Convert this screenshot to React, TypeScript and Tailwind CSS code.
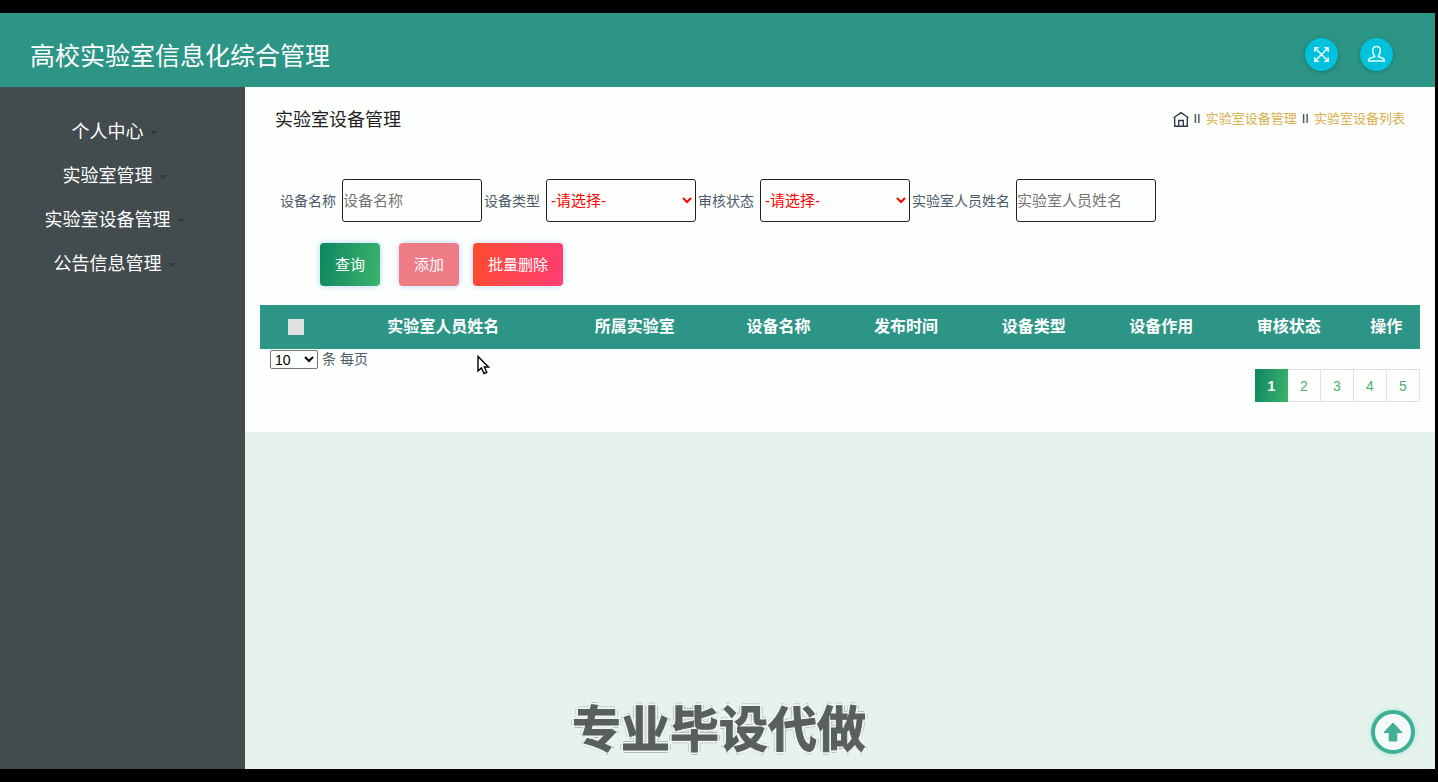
import { useState } from 'react'

const menus = ['个人中心', '实验室管理', '实验室设备管理', '公告信息管理']

const columns = [
  { title: '实验室人员姓名', width: 'w-[19.2%]' },
  { title: '所属实验室', width: 'w-[13.8%]' },
  { title: '设备名称', width: 'w-[11%]' },
  { title: '发布时间', width: 'w-[11%]' },
  { title: '设备类型', width: 'w-[11%]' },
  { title: '设备作用', width: 'w-[11%]' },
  { title: '审核状态', width: 'w-[11%]' },
  { title: '操作', width: 'w-[5.8%]' },
]

const fieldStyle = 'h-[43px] rounded-[3px] border border-[#222] text-[15px]'
const buttonStyle = 'h-[43px] rounded-[4px] px-[15px] text-[15px] text-white shadow-[0_0_6px_#b5d3f5]'
const roundStyle = 'flex size-[33px] items-center justify-center rounded-full bg-[#00c2dc] text-[#e4fbff] shadow-[0_1px_4px_#1c7468]'

function FullscreenIcon() {
  return (
    <svg width="17" height="17" viewBox="0 0 17 17" fill="none" stroke="currentColor" strokeWidth="1.6">
      <path d="M1.800 5.800V1.800h4M11.200 1.800h4v4M15.200 11.200v4h-4M5.800 15.200h-4v-4M2 2l13 13M15 2L2 15" />
    </svg>
  )
}

function UserIcon() {
  return (
    <svg width="19" height="18" viewBox="0 0 19 18" fill="none" stroke="currentColor" strokeWidth="1.6">
      <path d="M7.600 11C6.200 9.300 5.700 7.500 5.700 5.500 5.700 3 7.200 1.500 9.500 1.500s3.800 1.500 3.800 4c0 2-.5 3.800-1.900 5.500v.7l4.500 1.500c1.100.5 1.600 1.400 1.600 2.800h-16c0-1.400.5-2.300 1.600-2.800l4.500-1.500z" />
    </svg>
  )
}

function HomeIcon() {
  return (
    <svg width="16" height="17" viewBox="0 0 16 17" fill="none" stroke="#333b48" strokeWidth="1.4">
      <path d="M.600 6.800L8 1.600l7.400 5.200M1.700 6v9.300h12.600V6M5.700 15.300V9.500h4.600v5.800" />
    </svg>
  )
}

function TypeSelect({ id, label }: { id: string; label: string }) {
  return (
    <div className="flex items-center gap-1.5">
      <label htmlFor={id}>{label}</label>
      <select id={id} className={`${fieldStyle} w-[150px] text-[#f00]`}>
        <option>-请选择-</option>
      </select>
    </div>
  )
}

function TextField({ id, label }: { id: string; label: string }) {
  return (
    <div className="flex items-center gap-1.5">
      <label htmlFor={id}>{label}</label>
      <input id={id} type="text" placeholder={label} className={`${fieldStyle} w-[140px] placeholder:text-[#757575]`} />
    </div>
  )
}

export default function App() {
  const [page, setPage] = useState(1)

  return (
    <div className="relative flex min-h-screen flex-col bg-black py-[13px] pr-[3px] font-['Liberation_Sans','Noto_Sans_CJK_SC',sans-serif] text-sm text-[#4b5a68]">
      <header className="flex h-[74px] items-center justify-between bg-[#2d9586] pr-[42px] pl-[30px]">
        <h1 className="pt-3.5 text-[25px] text-white">高校实验室信息化综合管理</h1>
        <div className="flex gap-[22px] pt-2">
          <button aria-label="全屏" className={roundStyle}><FullscreenIcon /></button>
          <button aria-label="用户" className={roundStyle}><UserIcon /></button>
        </div>
      </header>

      <div className="flex flex-1">
        <nav className="w-[245px] shrink-0 bg-[#424c4e] pt-6 pr-4">
          {menus.map((m) => (
            <a key={m} href="#" className="flex h-[44px] items-center justify-center gap-1.5 text-[18px] text-white">
              {m}
              <span className="border-x-4 border-t-4 border-x-transparent border-t-[#30393b]" />
            </a>
          ))}
        </nav>

        <main className="min-w-0 flex-1 bg-[#e6f2ec]">
          <section className="bg-[#fdfffd] px-[15px] pb-[30px]">
            <div className="flex h-[64px] items-center justify-between px-[15px]">
              <h2 className="pt-1 text-[18px] text-[#222]">实验室设备管理</h2>
              <div className="flex items-center gap-[5px] text-[13px] text-[#333b48]">
                <a href="#" aria-label="首页"><HomeIcon /></a>
                <span>II</span>
                <a href="#" className="text-[#d9ae4e]">实验室设备管理</a>
                <span>II</span>
                <a href="#" className="text-[#d9ae4e]">实验室设备列表</a>
              </div>
            </div>

            <form className="pt-7" onSubmit={(e) => e.preventDefault()}>
              <div className="flex gap-0.5 pl-5">
                <TextField id="name" label="设备名称" />
                <TypeSelect id="type" label="设备类型" />
                <TypeSelect id="status" label="审核状态" />
                <TextField id="person" label="实验室人员姓名" />
              </div>
              <div className="mt-[21px] flex pl-[60px]">
                <button className={`${buttonStyle} bg-linear-100 from-[#088760] to-[#3bb36c]`}>查询</button>
                <button type="button" className={`${buttonStyle} ml-[19px] bg-[#ee7c84]`}>添加</button>
                <button type="button" className={`${buttonStyle} ml-[14px] bg-linear-100 from-[#ff4b2b] to-[#ff3d72]`}>批量删除</button>
              </div>
            </form>

            <table className="mt-[19px] w-full table-fixed bg-[#2d9586] text-base text-white">
              <thead>
                <tr className="h-[44px]">
                  <th className="w-[6.2%]">
                    <input type="checkbox" aria-label="全选" className="mx-auto block size-4 appearance-none bg-[#e0e2e2]" />
                  </th>
                  {columns.map((c) => (
                    <th key={c.title} className={`${c.width} font-bold`}>{c.title}</th>
                  ))}
                </tr>
              </thead>
            </table>

            <div className="flex h-5 items-center gap-1 pl-2.5">
              <select id="size" className="h-[19px] w-[48px] rounded-[2px] border border-[#767676] text-black">
                <option>10</option>
              </select>
              <label htmlFor="size">条 每页</label>
            </div>

            <div className="flex justify-end">
              {[1, 2, 3, 4, 5].map((n) => (
                <button
                  key={n}
                  onClick={() => setPage(n)}
                  className={n === page
                    ? 'h-[33px] w-[33px] bg-linear-100 from-[#088760] to-[#3bb36c] font-bold text-white'
                    : 'h-[33px] w-[33px] border-y border-r border-[#dee2e6] text-[#50ae70]'}
                >
                  {n}
                </button>
              ))}
            </div>
          </section>
        </main>
      </div>

      {/* mouse pointer */}
      <svg className="absolute top-[355px] left-[477px]" width="13" height="20" viewBox="0 0 13 20" fill="#fff" stroke="#000" strokeWidth="1.4">
        <path d="M1 1.500v14.500l3.400-3 2.600 5.500 2.800-1.200-2.500-5.300H11.500z" />
      </svg>

      <p className="pointer-events-none absolute inset-x-0 bottom-[17px] text-center text-[49px] leading-[70px] font-bold text-[#58605c] [-webkit-text-stroke:1px_#58605c] [text-shadow:2px_0_#eef5f1,-2px_0_#eef5f1,0_2px_#eef5f1,0_-2px_#eef5f1,2px_2px_#eef5f1,-2px_-2px_#eef5f1,2px_-2px_#eef5f1,-2px_2px_#eef5f1,3px_0_#b4bcb8,-3px_0_#b4bcb8,0_3px_#b4bcb8,0_-3px_#b4bcb8]">
        专业毕设代做
      </p>

      <button aria-label="返回顶部" className="absolute right-[23px] bottom-[28px] flex size-[44px] items-center justify-center rounded-full border-4 border-[#3fb096] bg-[#f4faf8] shadow-[0_0_5px_#9fe0e0]">
        <svg width="20" height="20" viewBox="0 0 20 20" fill="#3fb096" stroke="#3fb096" strokeLinejoin="round">
          <path d="M10 1l9 9.500h-5.200V19H6.200v-8.500H1z" />
        </svg>
      </button>
    </div>
  )
}
